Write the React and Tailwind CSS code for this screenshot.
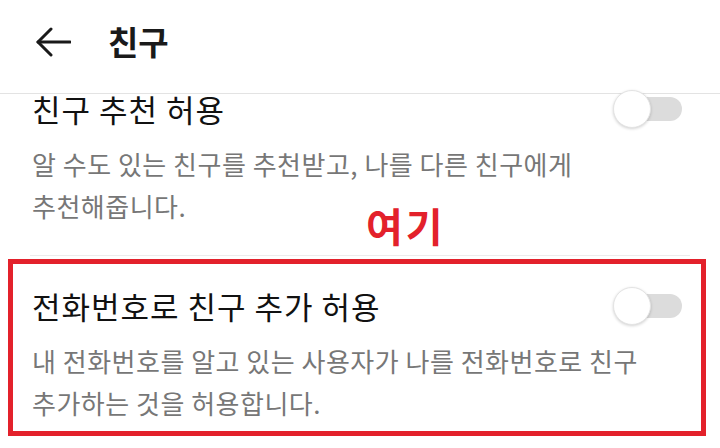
function Toggle() {
  return (
    <div className="relative h-[38px] w-[69px] shrink-0">
      <div className="absolute right-0 top-1/2 h-[24px] w-[64px] -translate-y-1/2 rounded-full bg-[#dcdcdc]" />
      <div className="absolute left-0 top-0 h-[38px] w-[38px] rounded-full border border-[#e4e4e4] bg-white shadow-[0_1px_3px_rgba(0,0,0,0.18)]" />
    </div>
  )
}

function SettingRow({ title, lines, className = "" }) {
  return (
    <div className={className}>
      <div className="flex items-center justify-between">
        <h2 className="text-[31px] leading-[36px] tracking-[1px] text-[#111]">{title}</h2>
        <Toggle />
      </div>
      <p className="mt-[15px] text-[26px] leading-[42px] tracking-[0.5px] text-[#777]">
        {lines.map((line, i) => (
          <span key={i} className="block whitespace-nowrap">
            {line}
          </span>
        ))}
      </p>
    </div>
  )
}

export default function App() {
  return (
    <div
      className="relative h-[448px] w-[720px] overflow-hidden bg-white"
      style={{ fontFamily: '"Noto Sans CJK KR", "Noto Sans", sans-serif' }}
    >
      <header className="flex h-[94px] items-center border-b border-[#e3e3e3] pb-[10px] pl-[35px]">
        <svg width="36" height="30" viewBox="0 0 36 30" fill="none" stroke="#1a1a1a" strokeWidth="3" strokeLinecap="round" strokeLinejoin="round">
          <path d="M16 2 L3 15 L16 28" />
          <path d="M3 15 H35" />
        </svg>
        <h1 className="ml-[37px] text-[33px] font-bold leading-none text-[#1a1a1a]">친구</h1>
      </header>

      <SettingRow
        className="-mt-[4px] pl-[32px] pr-[38px]"
        title="친구 추천 허용"
        lines={["알 수도 있는 친구를 추천받고, 나를 다른 친구에게", "추천해줍니다."]}
      />

      <div className="mx-[30px] mt-[28px] h-px bg-[#ececec]" />

      <div className="ml-[8px] mr-[14px] mt-[3px] h-[177px] border-[5px] border-[#e3212b] pl-[19px] pr-[19px] pt-[23px]">
        <SettingRow
          title="전화번호로 친구 추가 허용"
          lines={["내 전화번호를 알고 있는 사용자가 나를 전화번호로 친구", "추가하는 것을 허용합니다."]}
        />
      </div>

      <span className="absolute left-[366px] top-[205px] text-[40px] font-bold leading-none tracking-[3px] text-[#e3212b]">
        여기
      </span>
    </div>
  )
}
